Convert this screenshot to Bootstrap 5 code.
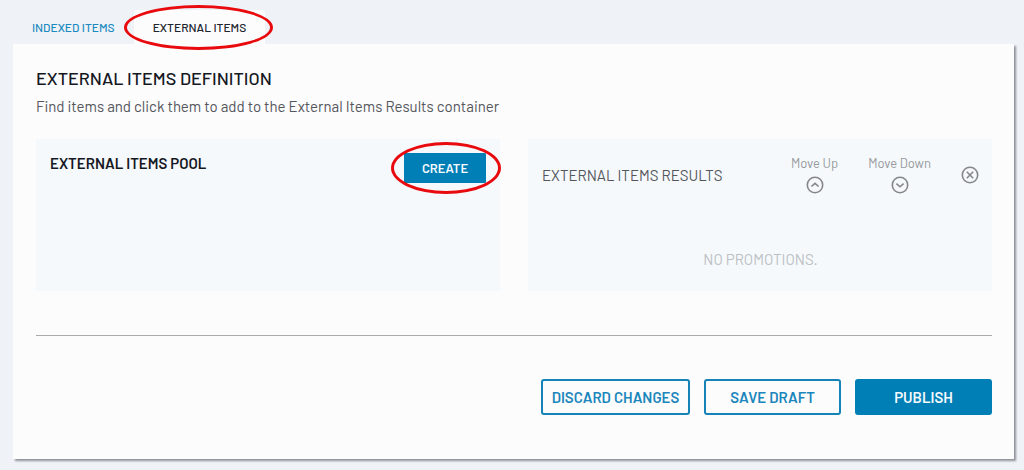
<!DOCTYPE html>
<html lang="en">
<head>
<meta charset="utf-8">
<meta name="viewport" content="width=device-width, initial-scale=1">
<title>External Items Definition</title>
<link href="https://cdn.jsdelivr.net/npm/bootstrap@5.3.0/dist/css/bootstrap.min.css" rel="stylesheet">
<style>
  body { background: #eff3f8; color: #54565b; font-family: Barlow, Roboto, "Liberation Sans", sans-serif; font-size: 15px; line-height: 20px; }
  .page { padding: 10px 10px 10px 13px; }
  .item-tabs { --bs-nav-link-font-size: 12px; }
  .item-tabs .nav-link { color: #1a8abf; font-weight: 500; line-height: 18px; padding: 8px 19px; border-radius: 4px 4px 0 0; }
  .item-tabs .nav-link.active { color: #20242c; background: #fcfcfd; }
  .sheet { background: #fcfcfd; box-shadow: 2px 2px 2px #8f9297; padding: 22px 22px 44px 23px; }
  .sheet-title { font-size: 18px; line-height: 24px; font-weight: 500; color: #15181f; margin-bottom: 6px; }
  .intro { margin-bottom: 23px; }
  .pools { --bs-gutter-x: 28px; }
  .pool { background: #f5f9fc; min-height: 152px; padding: 14px; }
  .panel-title { font-size: 15px; line-height: 20px; }
  .pool-title { font-weight: 600; color: #15181f; }
  .btn { --bs-btn-font-weight: 600; --bs-btn-line-height: 20px; }
  .btn-brand { --bs-btn-bg: #007fb6; --bs-btn-color: #f4fafd; --bs-btn-border-color: #007fb6; --bs-btn-hover-bg: #006c9b; --bs-btn-hover-color: #fff; }
  .btn-brand-line { --bs-btn-color: #1a86bb; --bs-btn-border-color: #1583b8; --bs-btn-hover-bg: #e5f3fa; --bs-btn-hover-color: #006c9b; }
  .btn-create { --bs-btn-padding-y: 4px; --bs-btn-padding-x: 0; --bs-btn-font-size: 13px; --bs-btn-border-radius: 1px; width: 82px; }
  .btn-action { --bs-btn-padding-y: 6px; --bs-btn-padding-x: 8px; --bs-btn-font-size: 15px; --bs-btn-border-width: 2px; --bs-btn-border-radius: 3px; min-width: 137px; }
  .btn-discard { min-width: 149px; }
  .results { padding-right: 13px; }
  .move { font-size: 13px; line-height: 18px; color: #97999d; background: none; padding: 1px 0 3px; }
  .move-down { margin: 0 30px; }
  .move svg, .remove svg { color: #85878b; display: block; }
  .remove { background: none; }
  .empty { color: #bcbfc3; margin-top: 52px; }
  .rule { border-top: 1px solid #a9abae; opacity: 1; margin: 44px 0 43px; }
  .actions { gap: 14px; }
  .ring { position: absolute; border: 3px solid #e80a0c; border-radius: 50%; pointer-events: none; }
  .ring-tab { inset: -5px -8px -6px -10px; }
  .ring-create { inset: -11px -15px -11px -13px; }
</style>
</head>
<body>
<main class="page">
  <ul class="nav item-tabs">
    <li class="nav-item"><a class="nav-link" href="#indexed">INDEXED ITEMS</a></li>
    <li class="nav-item position-relative">
      <a class="nav-link active" aria-current="page" href="#external">EXTERNAL ITEMS</a>
      <span class="ring ring-tab"></span>
    </li>
  </ul>
  <section class="sheet" id="external">
    <h1 class="sheet-title">EXTERNAL ITEMS DEFINITION</h1>
    <p class="intro">Find items and click them to add to the External Items Results container</p>
    <div class="row pools">
      <div class="col-6">
        <div class="pool d-flex justify-content-between align-items-start">
          <h2 class="panel-title pool-title mb-0">EXTERNAL ITEMS POOL</h2>
          <div class="position-relative">
            <button type="button" class="btn btn-brand btn-create">CREATE</button>
            <span class="ring ring-create"></span>
          </div>
        </div>
      </div>
      <div class="col-6">
        <div class="pool results">
          <div class="d-flex align-items-center">
            <h2 class="panel-title fw-normal mb-0 me-auto">EXTERNAL ITEMS RESULTS</h2>
            <button type="button" class="move border-0 d-flex flex-column align-items-center gap-1">Move Up
              <svg width="18" height="18" viewBox="0 0 18 18" fill="none" stroke="currentColor" stroke-width="1.6" aria-hidden="true"><circle cx="9" cy="9" r="7.7"/><path d="M5.4 10.5 9 7.3l3.6 3.2"/></svg>
            </button>
            <button type="button" class="move move-down border-0 d-flex flex-column align-items-center gap-1">Move Down
              <svg width="18" height="18" viewBox="0 0 18 18" fill="none" stroke="currentColor" stroke-width="1.6" aria-hidden="true"><circle cx="9" cy="9" r="7.7"/><path d="M5.4 7.6 9 10.8l3.6-3.2"/></svg>
            </button>
            <button type="button" class="remove border-0 p-0" aria-label="Remove">
              <svg width="18" height="18" viewBox="0 0 18 18" fill="none" stroke="currentColor" stroke-width="1.6" aria-hidden="true"><circle cx="9" cy="9" r="7.7"/><path d="m5.8 5.8 6.4 6.4m0-6.4-6.4 6.4"/></svg>
            </button>
          </div>
          <p class="empty text-center mb-0">NO PROMOTIONS.</p>
        </div>
      </div>
    </div>
    <hr class="rule">
    <div class="actions d-flex justify-content-end">
      <button type="button" class="btn btn-brand-line btn-action btn-discard">DISCARD CHANGES</button>
      <button type="button" class="btn btn-brand-line btn-action">SAVE DRAFT</button>
      <button type="button" class="btn btn-brand btn-action">PUBLISH</button>
    </div>
  </section>
</main>
<script src="https://cdn.jsdelivr.net/npm/bootstrap@5.3.0/dist/js/bootstrap.bundle.min.js"></script>
</body>
</html>
